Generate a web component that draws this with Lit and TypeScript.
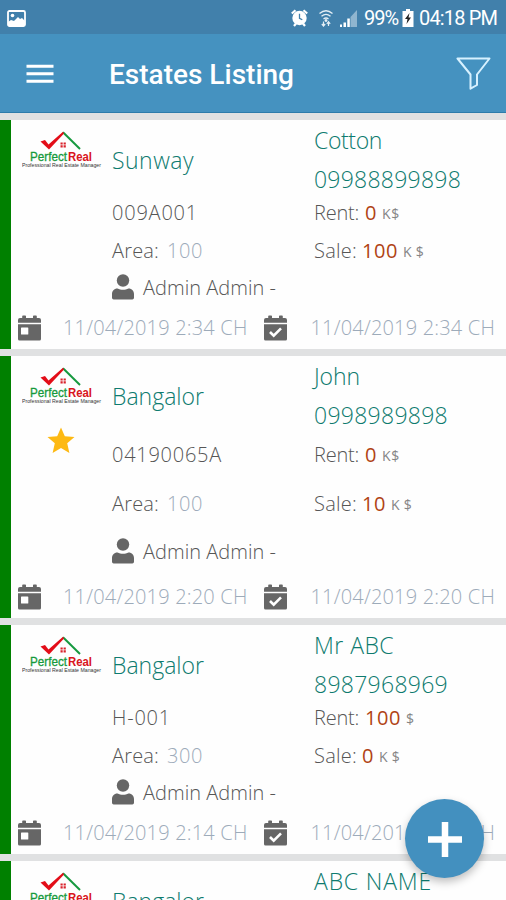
import { LitElement, html, css, svg, nothing } from "lit";
import { customElement, property } from "lit/decorators.js";

interface Piece { text: string; width: number }
interface Estate {
  name: Piece; owner: Piece; phone: Piece; code: Piece; area: string;
  rent: Piece; rentUnit: Piece; sale: Piece; saleUnit: Piece;
  date: string; starred?: boolean;
}

const p = (text: string, width: number): Piece => ({ text, width });

const estates: Estate[] = [
  { name: p("Sunway", 82), owner: p("Cotton", 68), phone: p("09988899898", 147), code: p("009A001", 86), area: "100",
    rent: p("0", 12), rentUnit: p("K$", 18), sale: p("100", 36), saleUnit: p("K $", 21), date: "11/04/2019 2:34 CH" },
  { name: p("Bangalor", 92), owner: p("John", 46), phone: p("0998989898", 134), code: p("04190065A", 110), area: "100",
    rent: p("0", 12), rentUnit: p("K$", 18), sale: p("10", 24), saleUnit: p("K $", 21), date: "11/04/2019 2:20 CH", starred: true },
  { name: p("Bangalor", 92), owner: p("Mr ABC", 80), phone: p("8987968969", 134), code: p("H-001", 59), area: "300",
    rent: p("100", 36), rentUnit: p("$", 9), sale: p("0", 12), saleUnit: p("K $", 21), date: "11/04/2019 2:14 CH" },
  { name: p("Bangalor", 92), owner: p("ABC NAME", 118), phone: p("0998989898", 134), code: p("H-002", 59), area: "100",
    rent: p("0", 12), rentUnit: p("K$", 18), sale: p("10", 24), saleUnit: p("K $", 21), date: "11/04/2019 2:10 CH" },
];

/** One line of text whose tracking is adjusted to fill a given width. */
@customElement("tracked-text")
export class TrackedText extends LitElement {
  @property() text = "";
  @property({ type: Number }) width = 0;
  static styles = css`
    :host { display: inline-block; white-space: pre; }
  `;
  render() { return html`<span>${this.text}</span>`; }
  updated() {
    const span = this.renderRoot.querySelector("span")!;
    span.style.letterSpacing = "0px";
    const natural = span.getBoundingClientRect().width;
    span.style.letterSpacing = `${(this.width - natural) / this.text.length}px`;
  }
}

const tracked = (piece: Piece, cls = "") =>
  html`<tracked-text class=${cls} .text=${piece.text} .width=${piece.width}></tracked-text>`;

const calendar = (mark: unknown) => html`
  <svg class="cal" width="23" height="26" viewBox="0 0 23 26">
    <path fill="#666" d="M5 .5h2.2a.8.8 0 0 1 .8.8V3h7V1.300a.8.8 0 0 1 .8-.8H18a.8.8 0 0 1 .8.8V3h2.200A2 2 0 0 1 23 5v2.700H0V5a2 2 0 0 1 2-2h2.200V1.300A.8.8 0 0 1 5 .5zM0 9.200h23V24a1.500 1.500 0 0 1-1.500 1.500H1.500A1.500 1.500 0 0 1 0 24z"/>
    ${mark}
  </svg>`;
const dayMark = svg`<rect x="3" y="12.500" width="7.300" height="7" rx=".6" fill="#fff"/>`;
const checkMark = svg`<path d="M6 17l3.700 3.700 7.300-7.400" fill="none" stroke="#fff" stroke-width="2.600"/>`;

@customElement("estate-card")
export class EstateCard extends LitElement {
  @property({ attribute: false }) estate!: Estate;

  static styles = css`
    :host { display: block; flex: none; font: 300 20px/38px "Open Sans", "Noto Sans", sans-serif; color: #565656; }
    .card { display: grid; grid-template-columns: 101px 202px 1fr; border-left: 11px solid #008000; background: #fefefe; height: 229px;
      grid-template-rows: 73px 38px 38px 38px 42px; box-sizing: border-box; }
    .card.tall { height: 262px; grid-template-rows: 73px 50px 48px 49px 42px; }
    .side { grid-row: 1 / 5; display: flex; flex-direction: column; }
    .logo { display: block; margin: 11px 0 0 11px; }
    .star { display: block; margin: 21px 0 0 36px; }
    .name, .who { color: #0e7b6f; font-size: 23px; }
    .name { line-height: 80px; }
    .who { display: flex; flex-direction: column; }
    .owner { height: 39px; line-height: 41px; }
    .phone { height: 34px; line-height: 40px; }
    .cell { display: flex; align-items: center; box-sizing: border-box; padding-top: 1px; }
    .pale { color: #9dabba; }
    .label { width: 51px; flex: none; }
    .label.sale { width: 48px; }
    .area { width: 55px; flex: none; }
    .money { color: #b04314; font-weight: 400; }
    .unit { font-size: 14px; margin-left: 5px; padding-top: 3px; font-weight: 400; color: #858585; }
    .agent { grid-column: 2 / 4; gap: 9px; padding: 0; }
    .person { flex: none; margin-bottom: 2px; }
    .dates { grid-column: 1 / 4; display: flex; align-items: center; padding-left: 7px; box-sizing: border-box; }
    .cal { flex: none; display: block; margin-bottom: 1px; }
    .first { margin: 0 16px 0 22px; }
    .last { margin-left: 24px; }
  `;

  render() {
    const e = this.estate;
    return html`
      <div class="card ${e.starred ? "tall" : ""}">
        <div class="side">
          <svg class="logo" width="80" height="39" viewBox="0 0 80 39">
            <path d="M41 1.200L58 18" fill="none" stroke="#16993f" stroke-width="2"/>
            <path d="M18.500 10.500l4.500-1.500 3.500 4.500L41 .8l1 1.800-15 15.900z" fill="#e30d18"/>
            <path d="M38.500 11.500h2.200v2h-2.200zM41.600 11.500h2.200v2h-2.200zM38.500 14.300h2.200v2.200h-2.200zM41.600 14.300h2.200v2.200h-2.200z" fill="#d8222b"/>
            <g font-family="Liberation Sans, sans-serif">
              <text x="8" y="29.500" font-size="12.500" textLength="37" lengthAdjust="spacingAndGlyphs" fill="#169a3c" stroke="#169a3c" stroke-width=".3">Perfect</text>
              <text x="46" y="29.500" font-size="12.500" font-weight="700" textLength="24" lengthAdjust="spacingAndGlyphs" fill="#d91420">Real</text>
              <text x="0" y="35.800" font-size="5" textLength="79" lengthAdjust="spacingAndGlyphs" fill="#333">Professional Real Estate Manager</text>
            </g>
          </svg>
          ${e.starred ? html`
            <svg class="star" width="28" height="27" viewBox="0 0 28 27">
              <path fill="#fdb913" d="M14 .5l3.800 8.700 9.700.9-7.300 6.200 2.200 9.700-8.400-5.100L5.600 26l2.200-9.700L.5 10.100l9.700-.9z"/>
            </svg>` : nothing}
        </div>
        <div class="name">${tracked(e.name)}</div>
        <div class="who">
          <div class="owner">${tracked(e.owner)}</div>
          <div class="phone">${tracked(e.phone)}</div>
        </div>
        <div class="cell">${tracked(e.code)}</div>
        <div class="cell"><span class="label">${tracked(p("Rent:", 45))}</span>${tracked(e.rent, "money")}${tracked(e.rentUnit, "unit")}</div>
        <div class="cell"><span class="area">${tracked(p("Area:", 47))}</span>${tracked(p(e.area, 36), "pale")}</div>
        <div class="cell"><span class="label sale">${tracked(p("Sale:", 43))}</span>${tracked(e.sale, "money")}${tracked(e.saleUnit, "unit")}</div>
        <div class="cell agent">
          <svg class="person" width="22" height="26" viewBox="0 0 22 26" fill="#666">
            <circle cx="11" cy="6.500" r="6.200"/>
            <path d="M5.500 14.500c1.700 1 3.500 1.300 5.500 1.300s3.800-.3 5.500-1.300C20 14.500 22 17 22 20v3.800A1.700 1.700 0 0 1 20.300 25.500H1.700A1.700 1.700 0 0 1 0 23.800V20c0-3 2-5.500 5.500-5.500z"/>
          </svg>
          ${tracked(p("Admin Admin -", 133))}
        </div>
        <div class="dates">
          ${calendar(dayMark)}${tracked(p(e.date, 184.5), "pale first")}${calendar(checkMark)}${tracked(p(e.date, 184.5), "pale last")}
        </div>
      </div>`;
  }
}

@customElement("app-root")
export class AppRoot extends LitElement {
  static styles = css`
    :host { display: block; position: relative; width: 506px; height: 900px; overflow: hidden; background: #e0e1e2; font-family: Roboto, sans-serif; color: #fff; }
    .status { height: 34px; background: #4180ab; display: flex; align-items: center; box-sizing: border-box; padding: 2px 9px 0 7px; font-size: 20px; }
    .grow { flex: 1; }
    .status svg { display: block; flex: none; }
    .alarm { margin-right: 11px; }
    .wifi { margin-right: 7px; }
    .signal { margin-right: 7px; }
    .battery { margin: 0 5px 0 4px; }
    .bar { height: 79px; background: #4592c0; border-bottom: 1px solid #2d7cab; box-sizing: border-box; display: flex; align-items: center; padding: 0 15px 0 26px; }
    .title { font-size: 28px; font-weight: 500; margin-left: 55px; line-height: 32px; padding-top: 4px; }
    .menu { display: block; padding-top: 1px; }
    .list { display: flex; flex-direction: column; gap: 7px; padding-top: 7px; }
    .fab { position: absolute; left: 405px; top: 799px; width: 79px; height: 79px; border-radius: 50%; background: #4390bf; display: flex; align-items: center; justify-content: center; box-shadow: 0 4px 9px rgba(0, 0, 0, .25); }
  `;

  render() {
    return html`
      <div class="status">
        <svg width="19" height="17" viewBox="0 0 19 17"><rect x="1" y="1" width="17" height="15" rx="1.500" fill="none" stroke="#fff" stroke-width="1.800"/><path d="M1 16v-4l3-2 3 1 4-4 2 2 2-1 3 3v5z" fill="#fff"/><circle cx="5.500" cy="5.500" r="1.800" fill="#fff"/></svg>
        <span class="grow"></span>
        <svg class="alarm" width="17" height="18" viewBox="0 0 17 18"><circle cx="8.500" cy="9" r="7.200" fill="#fff"/><path d="M.8 4.500L4.500 1.200M16.200 4.500L12.500 1.200M3 17l2-2.500M14 17l-2-2.500" stroke="#fff" stroke-width="2.200"/><path d="M8.500 4.800V9.300l2.800 1.500" fill="none" stroke="#4180ab" stroke-width="1.300"/></svg>
        <svg class="wifi" width="14" height="18" viewBox="0 0 14 18" fill="none" stroke="#e4eef5"><path d="M.5 4.500Q7-1 13.500 4.500M2.500 7.300Q7 3.500 11.500 7.300M4.500 10Q7 8 9.500 10" stroke-width="1.300"/><circle cx="7" cy="11.500" r="1" fill="#fff"/><path d="M4.500 12.500v4M2.800 15l1.700 2 1.700-2M9.500 17v-4M7.800 14.800l1.700-2 1.700 2" stroke-width="1.200"/></svg>
        <svg class="signal" width="17" height="18" viewBox="0 0 17 18"><path d="M10.500 8L17 1v17h-6.500z" fill="#8fb5cf"/><path d="M0 15.500h2V18H0zM3.500 13.500H6V18H3.500zM7.300 9.500h2.500V18H7.300z" fill="#fff"/></svg>
        ${tracked(p("99%", 34))}
        <svg class="battery" width="12" height="18" viewBox="0 0 12 18"><path d="M4 0h4v2h3.500v16H.5V2H4z" fill="#fff"/><path d="M7.500 4L3 10h2.500L4.500 15 9 8.500H6.500z" fill="#222"/></svg>
        ${tracked(p("04:18 PM", 78))}
      </div>
      <div class="bar">
        <svg class="menu" width="28" height="20" viewBox="0 0 28 20"><path d="M.5 2.300h27M.5 9.700h27M.5 17.200h27" stroke="#fff" stroke-width="2.900"/></svg>
        <span class="title">${tracked(p("Estates Listing", 185))}</span>
        <span class="grow"></span>
        <svg width="35" height="33" viewBox="0 0 35 33"><path d="M1.500 1.500h32L21 17.500V28l-6.500 3.700V17.500z" fill="none" stroke="#d7f1ff" stroke-width="2" stroke-linejoin="round"/></svg>
      </div>
      <div class="list">${estates.map((e) => html`<estate-card .estate=${e}></estate-card>`)}</div>
      <div class="fab"><svg width="34" height="36" viewBox="0 0 34 36"><path d="M17 1v35M0 18.500h34" stroke="#fff" stroke-width="6.500"/></svg></div>
    `;
  }
}
